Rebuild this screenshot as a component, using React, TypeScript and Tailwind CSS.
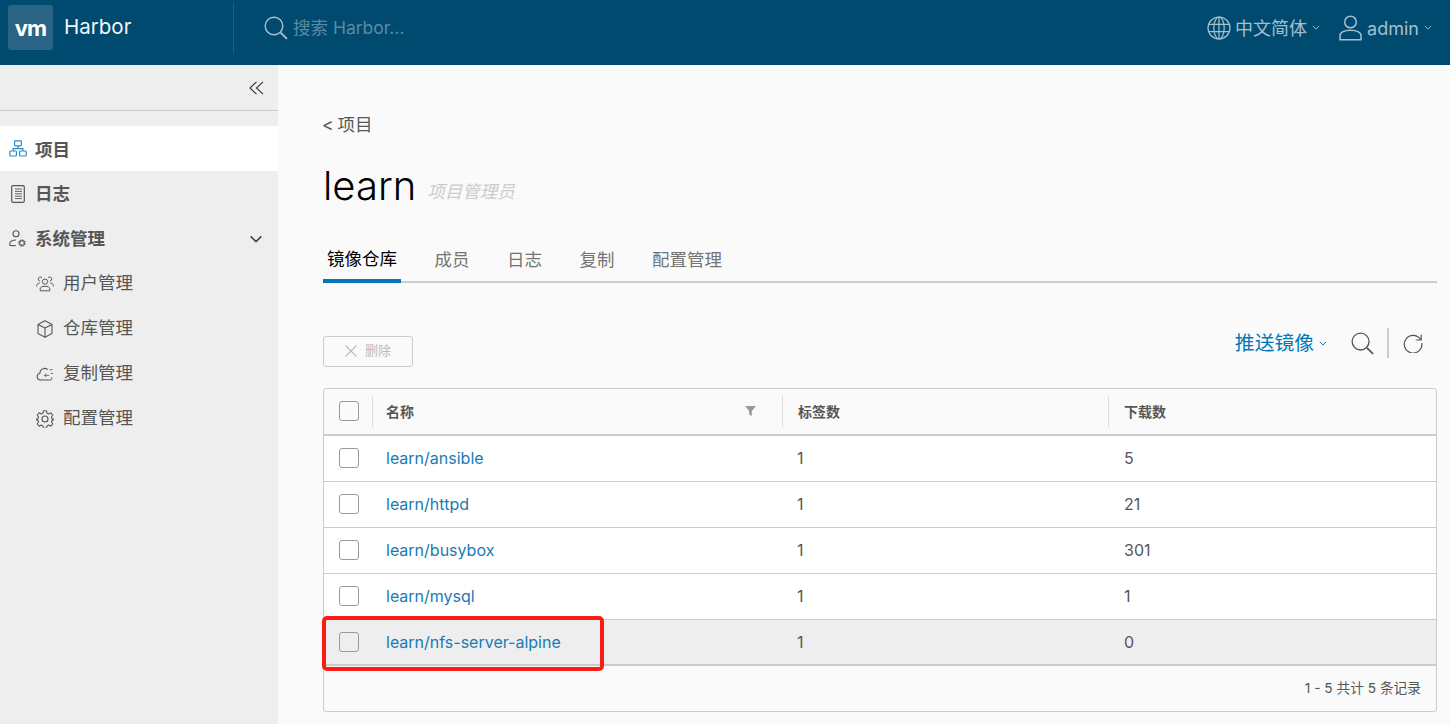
import React from 'react'

const FONT = "font-['Inter','Noto_Sans_CJK_SC',sans-serif]"

type IconProps = { className?: string }

const Chevron = ({ className = '' }: IconProps) => (
  <svg className={className} viewBox="0 0 10 6" fill="none" stroke="currentColor" strokeWidth="1.2">
    <path d="M1 1l4 4 4-4" />
  </svg>
)

const SearchIcon = ({ className = '' }: IconProps) => (
  <svg className={className} viewBox="0 0 24 24" fill="none" stroke="currentColor" strokeWidth="1.4">
    <circle cx="10" cy="10" r="8.8" />
    <path d="M16.6 16.6l6.4 6.2" strokeWidth="1.8" />
  </svg>
)

const ProjectIcon = ({ className = '' }: IconProps) => (
  <svg className={className} viewBox="0 0 18 17" fill="none" stroke="currentColor" strokeWidth="1.2">
    <rect x="5.6" y="0.8" width="6.8" height="5" rx="0.8" />
    <rect x="0.8" y="11" width="6.6" height="5" rx="0.8" />
    <rect x="10.6" y="11" width="6.6" height="5" rx="0.8" />
    <path d="M9 5.8v2.8M4.1 11V8.6h9.8V11" />
  </svg>
)

const LogIcon = ({ className = '' }: IconProps) => (
  <svg className={className} viewBox="0 0 14 18" fill="none" stroke="currentColor" strokeWidth="1.2">
    <rect x="0.7" y="0.7" width="12.6" height="16.6" rx="1.2" />
    <path d="M4 4h7M4 6.4h7M4 8.8h7M4 11.2h7M4 13.6h7" strokeWidth="0.9" />
  </svg>
)

const UserGearIcon = ({ className = '' }: IconProps) => (
  <svg className={className} viewBox="0 0 18 18" fill="none" stroke="currentColor" strokeWidth="1.1">
    <circle cx="7" cy="3.8" r="3" />
    <path d="M0.8 15.6v-2.4c0-1.6 2.6-3.2 6.2-3.2" />
    <path d="M0.8 15.6h6" />
    <circle cx="13" cy="13" r="2.6" strokeWidth="2" strokeDasharray="1.6 0.4" />
  </svg>
)

const UsersIcon = ({ className = '' }: IconProps) => (
  <svg className={className} viewBox="0 0 18 17" fill="none" stroke="currentColor" strokeWidth="1">
    <circle cx="9" cy="6.6" r="2.6" />
    <path d="M4.2 15.8v-2c0-1.6 2-2.6 4.8-2.6s4.8 1 4.8 2.6v2z" />
    <path d="M6 2.8a2.1 2.1 0 1 0-1.8 3.4M12 2.8a2.1 2.1 0 1 1 1.8 3.4" />
    <path d="M0.7 11.4v-1.2c0-1.2 1.4-2 3-2M17.3 11.4v-1.2c0-1.2-1.4-2-3-2" />
  </svg>
)

const BoxIcon = ({ className = '' }: IconProps) => (
  <svg className={className} viewBox="0 0 16 18" fill="none" stroke="currentColor" strokeWidth="1.1" strokeLinejoin="round">
    <path d="M8 0.8l7 3.6v9.2l-7 3.6-7-3.6V4.400z" />
    <path d="M1 4.400l7 3.600 7-3.600M8 8v9.200" />
  </svg>
)

const CloudIcon = ({ className = '' }: IconProps) => (
  <svg className={className} viewBox="0 0 19 16" fill="none" stroke="currentColor" strokeWidth="1.1">
    <path d="M16 14.400H4.600a3.700 3.700 0 0 1-0.500-7.300A5 5 0 0 1 12.400 3.400" />
    <path d="M9 9.400h5M10.800 7.600L9 9.400l1.800 1.800M14.400 3.500h3M15.600 7.400h2.400M16.600 11.200v3" strokeWidth="0.9" />
  </svg>
)

const GearIcon = ({ className = '' }: IconProps) => (
  <svg className={className} viewBox="0 0 18 18" fill="none" stroke="currentColor" strokeWidth="1.1" strokeLinejoin="round">
    <path d="M7.500 0.800h3l0.500 2.300 1.700 0.800 2.100-1.100 2 2.200-1.300 2 0.600 1.800 2.100 0.700v0l0 0-2.100 0.800-0.600 1.700 1.300 2-2 2.200-2.100-1.100-1.700 0.800-0.500 2.300h-3l-0.500-2.300-1.700-0.800-2.100 1.100-2-2.200 1.300-2-0.600-1.700-2.100-0.800 2.100-0.700 0.600-1.800-1.300-2 2-2.200 2.100 1.100 1.700-0.800z" />
    <circle cx="9" cy="9" r="3" />
  </svg>
)

const GlobeIcon = ({ className = '' }: IconProps) => (
  <svg className={className} viewBox="0 0 24 24" fill="none" stroke="currentColor" strokeWidth="1.200">
    <circle cx="12" cy="12" r="11" />
    <ellipse cx="12" cy="12" rx="5.200" ry="11" />
    <path d="M12 1v22M1.600 8.400h20.800M1.600 15.600h20.800" />
  </svg>
)

const UserIcon = ({ className = '' }: IconProps) => (
  <svg className={className} viewBox="0 0 23 26" fill="none" stroke="currentColor" strokeWidth="1.500">
    <circle cx="11.500" cy="7" r="5.800" />
    <path d="M1 24.800v-4.400c0-3 4.600-5.200 10.500-5.200S22 17.400 22 20.400v4.400z" />
  </svg>
)

const Checkbox = () => (
  <span className="block h-[20px] w-[20px] rounded-[3px] border border-[#9a9a9a] bg-transparent" />
)

const subNav = [
  { label: '用户管理', Icon: UsersIcon, size: 'h-[17px] w-[18px]' },
  { label: '仓库管理', Icon: BoxIcon, size: 'h-[18px] w-[16px]' },
  { label: '复制管理', Icon: CloudIcon, size: 'h-[16px] w-[19px]' },
  { label: '配置管理', Icon: GearIcon, size: 'h-[18px] w-[18px]' },
]

const tabs = ['镜像仓库', '成员', '日志', '复制', '配置管理']

const rows = [
  { name: 'learn/ansible', tags: 1, pulls: 5 },
  { name: 'learn/httpd', tags: 1, pulls: 21 },
  { name: 'learn/busybox', tags: 1, pulls: 301 },
  { name: 'learn/mysql', tags: 1, pulls: 1 },
  { name: 'learn/nfs-server-alpine', tags: 1, pulls: 0, highlighted: true },
]

const Header = () => (
  <header className="flex h-[65px] shrink-0 items-center bg-[#004a70] pb-[10px]">
    <div className="flex h-[50px] w-[234px] shrink-0 items-center border-r border-[#1e5f80] pl-[8px]">
      <div className="flex h-[45px] w-[45px] items-center justify-center rounded-[3px] bg-[#2a6484]">
        <span className="text-[22px] leading-none font-bold tracking-[-1px] text-white">vm</span>
      </div>
      <span className="ml-[11px] text-[20.5px] text-[#f2f6f8]">Harbor</span>
    </div>
    <div className="flex flex-1 items-center pl-[30px]">
      <SearchIcon className="h-[24px] w-[24px] text-[#a9c3d0]" />
      <span className="ml-[5px] mt-[2px] text-[17.5px] text-[#5b8aa3]">搜索 Harbor...</span>
    </div>
    <div className="flex items-center pr-[18px] text-[#a3c0cf]">
      <GlobeIcon className="h-[24px] w-[24px]" />
      <span className="ml-[4px] mt-[1px] text-[18px]">中文简体</span>
      <Chevron className="ml-[5px] h-[5px] w-[8px]" />
      <UserIcon className="ml-[19px] h-[26px] w-[23px]" />
      <span className="ml-[5px] mt-[1px] text-[18px]">admin</span>
      <Chevron className="ml-[5px] h-[5px] w-[8px]" />
    </div>
  </header>
)

const Sidebar = () => (
  <aside className="w-[278px] shrink-0 bg-[#eeeeee] text-[#565656]">
    <div className="flex h-[46px] items-center justify-end border-b border-[#cccccc] pr-[14px]">
      <svg className="h-[14px] w-[15px] text-[#333333]" viewBox="0 0 15 14" fill="none" stroke="currentColor" strokeWidth="1.100">
        <path d="M7.500 0.800L1 7l6.500 6.200M14 0.800L7.500 7l6.500 6.200" />
      </svg>
    </div>
    <div className="mt-[15px] flex h-[45px] items-center bg-white pl-[9px]">
      <ProjectIcon className="h-[17px] w-[18px] text-[#2a8fc9]" />
      <span className="ml-[8px] mt-[3px] text-[17.5px] font-bold">项目</span>
    </div>
    <div className="flex h-[45px] items-center pl-[11px]">
      <LogIcon className="h-[18px] w-[14px]" />
      <span className="ml-[10px] mt-[2px] text-[17.5px] font-bold">日志</span>
    </div>
    <div className="flex h-[45px] items-center pl-[9px] pr-[15px]">
      <UserGearIcon className="h-[18px] w-[18px]" />
      <span className="ml-[8px] mt-[1px] flex-1 text-[17.5px] font-bold">系统管理</span>
      <Chevron className="h-[8px] w-[14px] text-[#444444]" />
    </div>
    {subNav.map(({ label, Icon, size }) => (
      <div key={label} className="flex h-[45px] items-center pl-[36px]">
        <span className="flex w-[18px] justify-center">
          <Icon className={size} />
        </span>
        <span className="ml-[9px] text-[17.5px]">{label}</span>
      </div>
    ))}
  </aside>
)

const TableRow = ({ name, tags, pulls, highlighted }: (typeof rows)[number]) => (
  <div className={`grid h-[46px] grid-cols-[48px_410px_326px_1fr] items-center border-[#cccccc] pb-[1px] text-[16px] text-[#565656] ${highlighted ? 'border-b-2 bg-[#eeeeee]' : 'border-b bg-white'}`}>
    <div className="flex justify-center pl-[1px]">
      <Checkbox />
    </div>
    <a className="pl-[14px] text-[#1a7ab5]">{name}</a>
    <div className="pl-[15px]">{tags}</div>
    <div className="pl-[16px]">{pulls}</div>
  </div>
)

const RepoTable = () => (
  <div className="mt-[25px] h-[324px] rounded-[3px] border border-[#cccccc] bg-[#fafafa]">
    <div className="grid h-[47px] grid-cols-[48px_410px_326px_1fr] items-center border-b-2 border-[#cccccc] pb-[1px] text-[14px] font-bold text-[#565656]">
      <div className="flex justify-center pl-[1px]">
        <Checkbox />
      </div>
      <div className="flex h-[31px] items-center justify-between border-l border-[#dddddd] pl-[13px] pr-[26px]">
        <span>名称</span>
        <svg className="h-[10px] w-[11px] text-[#999999]" viewBox="0 0 11 10" fill="currentColor">
          <path d="M0 0h11L6.800 5v5L4.200 8.400V5z" />
        </svg>
      </div>
      <div className="flex h-[31px] items-center border-l border-[#dddddd] pl-[15px]">标签数</div>
      <div className="flex h-[31px] items-center border-l border-[#dddddd] pl-[15px]">下载数</div>
    </div>
    {rows.map((row) => (
      <TableRow key={row.name} {...row} />
    ))}
    <div className="flex h-[44px] items-center justify-end pr-[15px] text-[13.7px] text-[#565656]">
      1 - 5 共计 5 条记录
    </div>
  </div>
)

const Main = () => (
  <main className="relative flex-1 bg-[#fafafa] pl-[45px] pr-[13px]">
    <div className="-ml-[1px] mt-[48px] text-[17.5px] leading-[24px] text-[#565656] [word-spacing:-1px]">&lt; 项目</div>
    <div className="mt-[24px] flex h-[50px] items-center">
      <h1 className="text-[40px] leading-none font-light text-black">learn</h1>
      <span className="ml-[11px] mt-[13px] text-[17.5px] italic text-[#cccccc]">项目管理员</span>
    </div>
    <nav className="mt-[24px] flex h-[48px] gap-[29.5px] border-b-2 border-[#cccccc]">
      {tabs.map((tab, i) => (
        <div
          key={tab}
          className={`-mb-[2px] flex items-center px-[4px] text-[17.5px] ${i === 0 ? 'border-b-[4px] border-[#0079b8] pt-[4px] text-black' : 'pt-[2px] text-[#747474]'}`}
        >
          {tab}
        </div>
      ))}
    </nav>
    <div className="mt-[40px] flex h-[40px] items-center justify-between">
      <button className="mt-[16px] flex h-[31px] w-[90px] items-center justify-center rounded-[3px] border border-[#cccccc] text-[13px] text-[#bbbbbb]">
        <svg className="mr-[8px] h-[12px] w-[12px]" viewBox="0 0 12 12" fill="none" stroke="currentColor" strokeWidth="1.100">
          <path d="M0.500 0.500l11 11M11.500 0.500l-11 11" />
        </svg>
        删除
      </button>
      <div className="flex items-center pr-[14px]">
        <span className="mt-[2px] text-[19.8px] text-[#0079b8]">推送镜像</span>
        <Chevron className="ml-[5px] h-[5px] w-[8px] text-[#0079b8]" />
        <SearchIcon className="ml-[24px] h-[23px] w-[23px] text-[#565656]" />
        <span className="ml-[13px] mr-[14px] h-[30px] w-[2px] bg-[#cccccc]" />
        <svg className="h-[20px] w-[20px] text-[#565656]" viewBox="0 0 20 20" fill="none" stroke="currentColor" strokeWidth="1.200">
          <path d="M17.800 7A8.800 8.800 0 1 0 18.800 10M18.200 1.500V7h-5.500" />
        </svg>
      </div>
    </div>
    <RepoTable />
    {/* red annotation drawn on top of the last row */}
    <div className="absolute left-[44px] top-[551px] h-[55px] w-[282px] rounded-[5px] border-[4px] border-[#fb1c13]" />
  </main>
)

export default function App() {
  return (
    <div className={`flex h-[724px] w-[1450px] flex-col overflow-hidden ${FONT}`}>
      <Header />
      <div className="flex flex-1">
        <Sidebar />
        <Main />
      </div>
    </div>
  )
}
